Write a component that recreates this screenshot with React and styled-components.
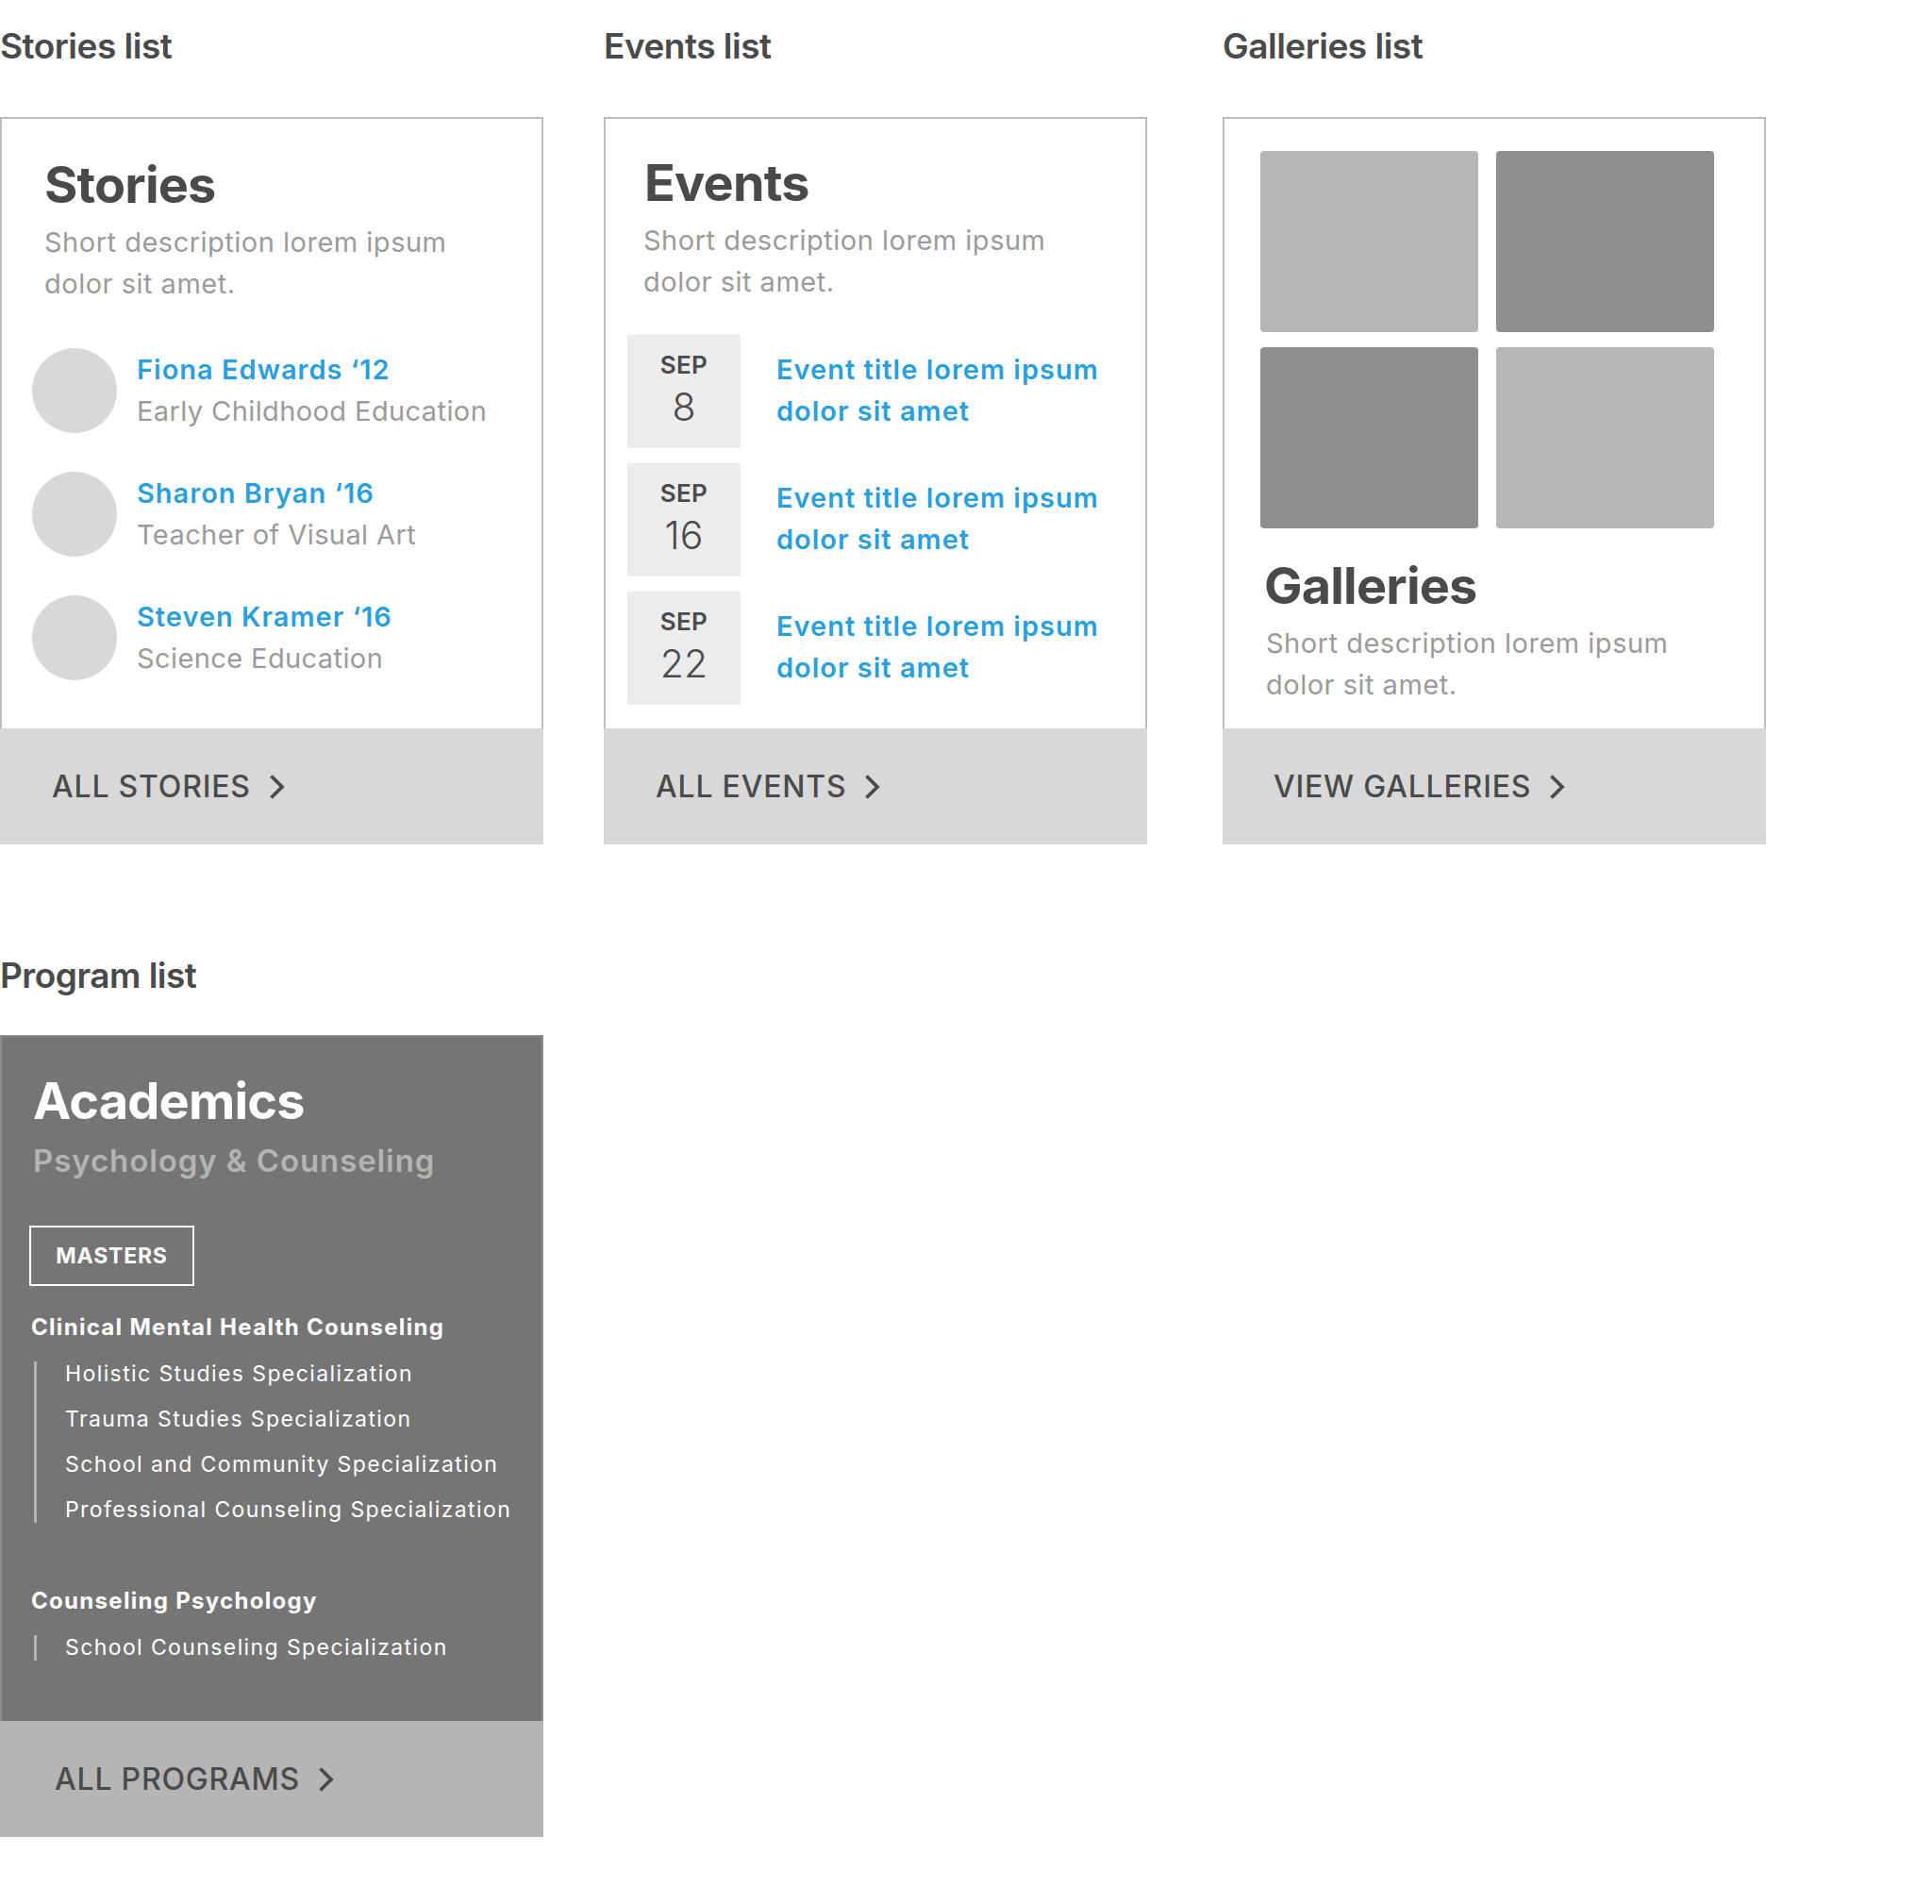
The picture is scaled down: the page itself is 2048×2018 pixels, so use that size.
import styled, { createGlobalStyle } from "styled-components";

const GlobalStyle = createGlobalStyle`
  html, body {
    margin: 0;
    padding: 0;
    background: #ffffff;
  }
  body {
    font-family: Inter, "Noto Sans", sans-serif;
    color: #4a4a4a;
    -webkit-font-smoothing: antialiased;
  }
`;

const stories = [
  { name: "Fiona Edwards ‘12", role: "Early Childhood Education" },
  { name: "Sharon Bryan ‘16", role: "Teacher of Visual Art" },
  { name: "Steven Kramer ‘16", role: "Science Education" },
];

const events = [
  { month: "SEP", day: "8" },
  { month: "SEP", day: "16" },
  { month: "SEP", day: "22" },
];

const tiles = ["#b7b7b7", "#8f8f8f", "#8f8f8f", "#b7b7b7"];

const programs = [
  {
    title: "Clinical Mental Health Counseling",
    items: [
      "Holistic Studies Specialization",
      "Trauma Studies Specialization",
      "School and Community Specialization",
      "Professional Counseling Specialization",
    ],
  },
  {
    title: "Counseling Psychology",
    items: ["School Counseling Specialization"],
  },
];

function Chevron() {
  return (
    <ChevronIcon width="18" height="26" viewBox="0 0 18 26">
      <polyline points="2.5,1.5 14,13 2.5,24.5" />
    </ChevronIcon>
  );
}

function App() {
  return (
    <>
      <GlobalStyle />
      <Page>
        <TopRow>
          <Column>
            <SectionTitle>Stories list</SectionTitle>
            <Card>
              <CardBody $top={38} $bottom={51}>
                <CardTitle $left={45}>Stories</CardTitle>
                <Description $left={45}>
                  Short description lorem ipsum
                  <br />
                  dolor sit amet.
                </Description>
                <StoryList>
                  {stories.map((s) => (
                    <StoryRow key={s.name}>
                      <Avatar />
                      <div>
                        <LinkText>{s.name}</LinkText>
                        <StoryRole>{s.role}</StoryRole>
                      </div>
                    </StoryRow>
                  ))}
                </StoryList>
              </CardBody>
              <CardFooter $pad={55}>
                ALL STORIES
                <Chevron />
              </CardFooter>
            </Card>
          </Column>

          <Column $offset={64}>
            <SectionTitle>Events list</SectionTitle>
            <Card>
              <CardBody $top={36} $bottom={24}>
                <CardTitle $left={41}>Events</CardTitle>
                <Description $left={40}>
                  Short description lorem ipsum
                  <br />
                  dolor sit amet.
                </Description>
                <EventList>
                  {events.map((e) => (
                    <EventRow key={e.day}>
                      <DateBox>
                        <Month>{e.month}</Month>
                        <Day>{e.day}</Day>
                      </DateBox>
                      <EventTitle>Event title lorem ipsum dolor sit amet</EventTitle>
                    </EventRow>
                  ))}
                </EventList>
              </CardBody>
              <CardFooter $pad={55}>
                ALL EVENTS
                <Chevron />
              </CardFooter>
            </Card>
          </Column>

          <Column $offset={80}>
            <SectionTitle>Galleries list</SectionTitle>
            <Card>
              <CardBody $top={34} $bottom={20}>
                <TileGrid>
                  {tiles.map((c, i) => (
                    <Tile key={i} $color={c} />
                  ))}
                </TileGrid>
                <CardTitle $left={42} $gap={29}>
                  Galleries
                </CardTitle>
                <Description $left={44}>
                  Short description lorem ipsum
                  <br />
                  dolor sit amet.
                </Description>
              </CardBody>
              <CardFooter $pad={54}>
                VIEW GALLERIES
                <Chevron />
              </CardFooter>
            </Card>
          </Column>
        </TopRow>

        <ProgramSection>
          <SectionTitle $gap={41}>Program list</SectionTitle>
          <ProgramCard>
            <ProgramBody>
              <ProgramTitle>Academics</ProgramTitle>
              <ProgramSubtitle>Psychology &amp; Counseling</ProgramSubtitle>
              <DegreeTag>MASTERS</DegreeTag>
              {programs.map((p) => (
                <ProgramGroup key={p.title}>
                  <GroupTitle>{p.title}</GroupTitle>
                  <SubList>
                    {p.items.map((item) => (
                      <li key={item}>{item}</li>
                    ))}
                  </SubList>
                </ProgramGroup>
              ))}
            </ProgramBody>
            <CardFooter $pad={58} $bg="#b5b5b5">
              ALL PROGRAMS
              <Chevron />
            </CardFooter>
          </ProgramCard>
        </ProgramSection>
      </Page>
    </>
  );
}

const Page = styled.main`
  padding: 27px 0 70px;
`;

const TopRow = styled.div`
  display: flex;
  align-items: stretch;
`;

const Column = styled.section`
  width: 576px;
  margin-left: ${(p) => p.$offset || 0}px;
  display: flex;
  flex-direction: column;
`;

const SectionTitle = styled.h2`
  margin: 0 0 ${(p) => p.$gap || 53}px;
  font-size: 37px;
  line-height: 44px;
  font-weight: 600;
  letter-spacing: -0.5px;
  color: #4a4a4a;
`;

const Card = styled.div`
  flex: 1;
  display: flex;
  flex-direction: column;
`;

const CardBody = styled.div`
  flex: 1;
  border: 2px solid #bdbdbd;
  border-bottom: none;
  padding: ${(p) => p.$top}px 0 ${(p) => p.$bottom}px;
  background: #ffffff;
`;

const CardTitle = styled.h3`
  margin: ${(p) => p.$gap || 0}px 0 7px ${(p) => p.$left}px;
  font-size: 54px;
  line-height: 64px;
  font-weight: 700;
  letter-spacing: -0.8px;
  color: #4a4a4a;
`;

const Description = styled.p`
  margin: 0 0 0 ${(p) => p.$left}px;
  font-size: 29px;
  line-height: 44px;
  font-weight: 400;
  letter-spacing: 0.5px;
  color: #9b9b9b;
`;

const StoryList = styled.div`
  margin-top: 46px;
  padding-left: 32px;
  display: flex;
  flex-direction: column;
  gap: 41px;
`;

const StoryRow = styled.div`
  display: flex;
  align-items: center;
  gap: 21px;
`;

const Avatar = styled.div`
  width: 90px;
  height: 90px;
  border-radius: 50%;
  background: #d8d8d8;
  flex-shrink: 0;
`;

const LinkText = styled.div`
  font-size: 29px;
  line-height: 44px;
  font-weight: 600;
  letter-spacing: 1px;
  color: #2a9fe0;
`;

const StoryRole = styled.div`
  font-size: 29px;
  line-height: 44px;
  font-weight: 400;
  letter-spacing: 0.4px;
  color: #9b9b9b;
`;

const EventList = styled.div`
  margin-top: 34px;
  padding-left: 23px;
  display: flex;
  flex-direction: column;
  gap: 16px;
`;

const EventRow = styled.div`
  display: flex;
  align-items: center;
  gap: 38px;
`;

const DateBox = styled.div`
  width: 120px;
  height: 120px;
  flex-shrink: 0;
  background: #ececec;
  display: flex;
  flex-direction: column;
  align-items: center;
  padding-top: 17px;
  box-sizing: border-box;
`;

const Month = styled.div`
  font-size: 26px;
  line-height: 30px;
  font-weight: 600;
  letter-spacing: 0.3px;
  color: #4a4a4a;
`;

const Day = styled.div`
  margin-top: 5px;
  font-size: 41px;
  line-height: 48px;
  font-weight: 300;
  color: #4a4a4a;
`;

const EventTitle = styled(LinkText)`
  width: 380px;
  line-height: 44px;
  padding-bottom: 2px;
`;

const TileGrid = styled.div`
  margin-left: 38px;
  display: grid;
  grid-template-columns: 231px 231px;
  grid-auto-rows: 192px;
  column-gap: 19px;
  row-gap: 16px;
`;

const Tile = styled.div`
  border-radius: 4px;
  background: ${(p) => p.$color};
`;

const CardFooter = styled.div`
  height: 123px;
  flex-shrink: 0;
  display: flex;
  align-items: center;
  padding-left: ${(p) => p.$pad}px;
  background: ${(p) => p.$bg || "#d8d8d8"};
  font-size: 32px;
  line-height: 40px;
  font-weight: 500;
  letter-spacing: 0.8px;
  color: #4a4a4a;
`;

const ChevronIcon = styled.svg`
  margin-left: 19px;
  fill: none;
  stroke: #4a4a4a;
  stroke-width: 3.8;
  stroke-linecap: butt;
  stroke-linejoin: miter;
`;

const ProgramSection = styled.section`
  width: 576px;
  margin-top: 117px;
`;

const ProgramCard = styled.div`
  display: flex;
  flex-direction: column;
`;

const ProgramBody = styled.div`
  background: #757575;
  border: 2px solid #8c8c8c;
  border-bottom: none;
  padding: 36px 0 54px 29px;
`;

const ProgramTitle = styled.h3`
  margin: 0 0 0 4px;
  font-size: 54px;
  line-height: 64px;
  font-weight: 700;
  letter-spacing: -0.8px;
  color: #ffffff;
`;

const ProgramSubtitle = styled.div`
  margin: 11px 0 49px 4px;
  font-size: 33px;
  line-height: 40px;
  font-weight: 600;
  letter-spacing: 0.9px;
  color: #b4b4b4;
`;

const DegreeTag = styled.div`
  width: 175px;
  height: 64px;
  box-sizing: border-box;
  border: 2px solid #ffffff;
  display: flex;
  align-items: center;
  justify-content: center;
  font-size: 23px;
  font-weight: 700;
  letter-spacing: 0.8px;
  color: #ffffff;
  margin-bottom: 28px;
`;

const ProgramGroup = styled.div`
  & + & {
    margin-top: 57px;
  }
`;

const GroupTitle = styled.div`
  margin-left: 2px;
  font-size: 24px;
  line-height: 32px;
  font-weight: 700;
  letter-spacing: 1.3px;
  color: #ffffff;
  margin-bottom: 9px;
`;

const SubList = styled.ul`
  position: relative;
  list-style: none;
  margin: 0 0 0 5px;
  padding: 0 0 0 33px;
  font-size: 23px;
  line-height: 48px;
  font-weight: 400;
  letter-spacing: 1.4px;
  color: #ffffff;
  &::before {
    content: "";
    position: absolute;
    left: 0;
    top: 11px;
    bottom: 10px;
    width: 3px;
    background: #b3b3b3;
  }
`;

export default App;
